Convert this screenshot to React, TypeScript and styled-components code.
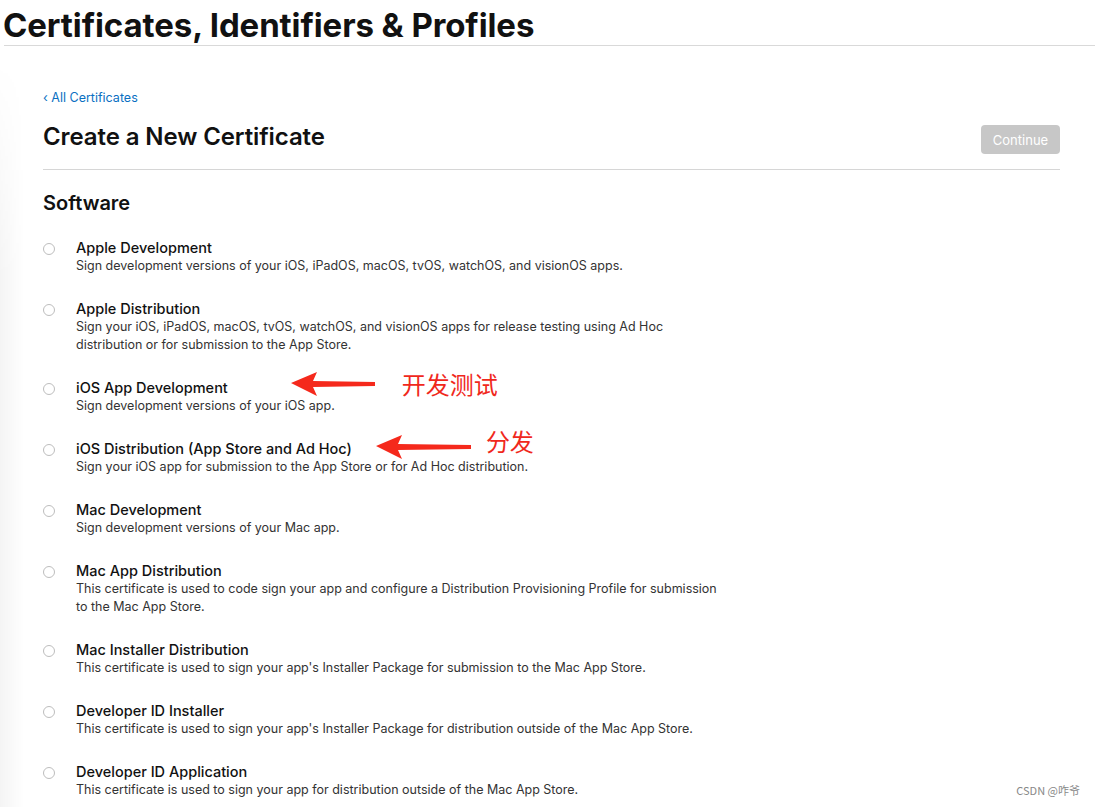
import styled, { createGlobalStyle } from "styled-components";

const GlobalStyle = createGlobalStyle`
  html, body {
    margin: 0;
    padding: 0;
    background: #fff;
  }
  body {
    font-family: Inter, "Noto Sans", "Noto Sans CJK SC", sans-serif;
    color: #1d1d1f;
    -webkit-font-smoothing: antialiased;
  }
`;

const certificates = [
  {
    title: "Apple Development",
    desc: "Sign development versions of your iOS, iPadOS, macOS, tvOS, watchOS, and visionOS apps.",
  },
  {
    title: "Apple Distribution",
    desc: "Sign your iOS, iPadOS, macOS, tvOS, watchOS, and visionOS apps for release testing using Ad Hoc distribution or for submission to the App Store.",
  },
  {
    title: "iOS App Development",
    desc: "Sign development versions of your iOS app.",
    note: "开发测试",
  },
  {
    title: "iOS Distribution (App Store and Ad Hoc)",
    desc: "Sign your iOS app for submission to the App Store or for Ad Hoc distribution.",
    note: "分发",
  },
  {
    title: "Mac Development",
    desc: "Sign development versions of your Mac app.",
  },
  {
    title: "Mac App Distribution",
    desc: "This certificate is used to code sign your app and configure a Distribution Provisioning Profile for submission to the Mac App Store.",
  },
  {
    title: "Mac Installer Distribution",
    desc: "This certificate is used to sign your app's Installer Package for submission to the Mac App Store.",
  },
  {
    title: "Developer ID Installer",
    desc: "This certificate is used to sign your app's Installer Package for distribution outside of the Mac App Store.",
  },
  {
    title: "Developer ID Application",
    desc: "This certificate is used to sign your app for distribution outside of the Mac App Store.",
  },
];

const Arrow = ({ width }: { width: number }) => (
  <svg width={width} height="26" viewBox={`0 0 ${width} 26`}>
    <path
      d={`M0 12 L26 1 L22 10 L${width} 11 L${width} 15 L22 16 L26 25 Z`}
      fill="#f5291c"
    />
  </svg>
);

const App = () => {
  return (
    <>
      <GlobalStyle />
      <Page>
        <TopBar>
          <PageTitle>Certificates, Identifiers &amp; Profiles</PageTitle>
        </TopBar>
        <Main>
          <BackLink href="#">‹ All Certificates</BackLink>
          <HeadRow>
            <Heading>Create a New Certificate</Heading>
            <ContinueButton disabled>Continue</ContinueButton>
          </HeadRow>
          <SectionTitle>Software</SectionTitle>
          <List>
            {certificates.map((c, i) => (
              <Item key={c.title}>
                <Radio type="radio" name="cert" />
                <ItemText>
                  <TitleRow>
                    <ItemTitle>{c.title}</ItemTitle>
                    {c.note && (
                      <Note $first={i === 2}>
                        <Arrow width={i === 2 ? 84 : 95} />
                        <NoteText $raise={i === 3}>{c.note}</NoteText>
                      </Note>
                    )}
                  </TitleRow>
                  <ItemDesc>{c.desc}</ItemDesc>
                </ItemText>
              </Item>
            ))}
          </List>
        </Main>
        <Watermark>CSDN @咋爷</Watermark>
      </Page>
    </>
  );
};

const Page = styled.div`
  position: relative;
  min-height: 807px;
  overflow: hidden;

  &::before {
    content: "";
    position: absolute;
    left: 0;
    top: 60px;
    bottom: 0;
    width: 24px;
    background: linear-gradient(
      to right,
      rgba(0, 0, 0, 0.045),
      rgba(0, 0, 0, 0)
    );
    -webkit-mask-image: linear-gradient(to bottom, transparent, #000 220px);
    mask-image: linear-gradient(to bottom, transparent, #000 220px);
    pointer-events: none;
  }
`;

const TopBar = styled.header`
  margin-left: 4px;
  height: 45px;
  border-bottom: 1px solid #d9d9d9;
  background: #fff;
`;

const PageTitle = styled.h1`
  margin: 0;
  padding-top: 5px;
  margin-left: -1px;
  font-size: 33px;
  line-height: 40px;
  font-weight: 700;
  letter-spacing: -0.1px;
  color: #111;
`;

const Main = styled.main`
  padding: 44px 35px 0 43px;
`;

const BackLink = styled.a`
  display: block;
  font-size: 12.5px;
  line-height: 16px;
  color: #0a6fc2;
  text-decoration: none;
`;

const HeadRow = styled.div`
  display: flex;
  justify-content: space-between;
  align-items: center;
  padding: 14px 0 15px;
  border-bottom: 1px solid #d6d6d6;
`;

const Heading = styled.h2`
  margin: 0;
  font-size: 24px;
  line-height: 30px;
  font-weight: 600;
  letter-spacing: -0.1px;
  color: #111;
`;

const ContinueButton = styled.button`
  margin-top: 5px;
  width: 79px;
  height: 29px;
  border: none;
  border-radius: 4px;
  background: #c7c7c7;
  color: #fff;
  font-family: inherit;
  font-size: 13px;
`;

const SectionTitle = styled.h3`
  margin: 20px 0 0;
  font-size: 20px;
  line-height: 26px;
  font-weight: 600;
  color: #111;
`;

const List = styled.div`
  display: flex;
  flex-direction: column;
  gap: 24px;
  margin-top: 22px;
`;

const Item = styled.label`
  display: flex;
  align-items: flex-start;
  gap: 21px;
`;

const Radio = styled.input`
  appearance: none;
  margin: 5px 0 0;
  width: 12px;
  height: 12px;
  border: 1px solid #bdbdbd;
  border-radius: 50%;
  background: #fff;
  flex-shrink: 0;
`;

const ItemText = styled.div`
  display: flex;
  flex-direction: column;
`;

const TitleRow = styled.div`
  display: flex;
  align-items: center;
`;

const ItemTitle = styled.div`
  font-size: 14.5px;
  line-height: 19px;
  font-weight: 500;
  color: #111;
`;

const Note = styled.div<{ $first: boolean }>`
  display: flex;
  align-items: center;
  margin-left: ${(p) => (p.$first ? "63px" : "24px")};
  height: 19px;
  margin-top: ${(p) => (p.$first ? "-8px" : "-4px")};
`;

const NoteText = styled.span<{ $raise: boolean }>`
  margin-left: ${(p) => (p.$raise ? "15px" : "27px")};
  margin-top: ${(p) => (p.$raise ? "-12px" : "0")};
  font-family: "Noto Sans CJK SC", sans-serif;
  font-size: 24px;
  color: #f0281c;
  white-space: nowrap;
`;

const ItemDesc = styled.div`
  max-width: 650px;
  font-size: 12.5px;
  line-height: 18px;
  color: #333;
`;

const Watermark = styled.div`
  position: absolute;
  right: 15px;
  bottom: 9px;
  font-family: "Noto Sans CJK SC", sans-serif;
  font-size: 11px;
  color: #888;
`;

export default App;
